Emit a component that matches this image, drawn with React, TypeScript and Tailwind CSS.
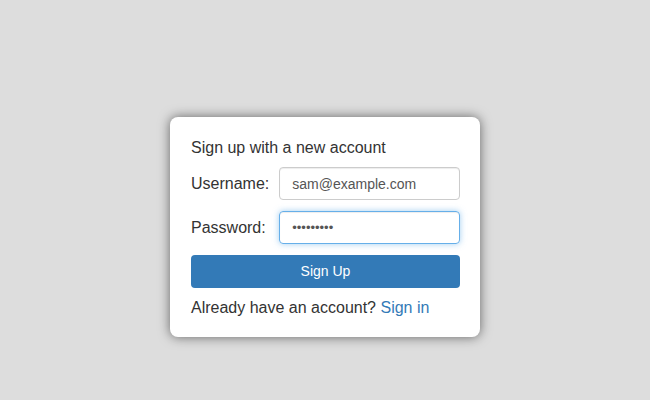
import * as React from 'react';

const App = () => {
  return (
    <div className="min-h-screen w-full bg-[#dddddd] flex justify-center pt-[117px] font-['Liberation_Sans',Arial,sans-serif] text-[#333333]">
      <div className="w-[310px] h-[220px] bg-white rounded-[8px] shadow-[0_0_12px_rgba(0,0,0,0.55)] pl-[21px] pr-[20px] pt-[21px]">
        <div className="text-[16px] leading-[20px]">Sign up with a new account</div>

        <div className="mt-[9px] grid grid-cols-[auto_1fr] gap-x-[10px] gap-y-[11px] items-center">
          <label className="text-[16px]">Username:</label>
          <input
            type="text"
            defaultValue="sam@example.com"
            className="h-[33px] w-full rounded-[4px] border border-[#cccccc] px-[12px] text-[14px] text-[#555555] outline-none shadow-[inset_0_1px_1px_rgba(0,0,0,0.075)]"
          />
          <label className="text-[16px]">Password:</label>
          <input
            type="password"
            defaultValue="123456789"
            className="h-[33px] w-full rounded-[4px] border border-[#66afe9] px-[12px] text-[13px] text-[#555555] outline-none shadow-[inset_0_1px_1px_rgba(0,0,0,0.075),0_0_6px_rgba(102,175,233,0.6)]"
          />
        </div>

        <button className="mt-[11px] h-[33px] w-full rounded-[4px] bg-[#337ab7] text-white text-[14px]">
          Sign Up
        </button>

        <div className="mt-[10px] text-[16px] leading-[20px]">
          Already have an account? <a className="text-[#337ab7]">Sign in</a>
        </div>
      </div>
    </div>
  );
};

export default App;
